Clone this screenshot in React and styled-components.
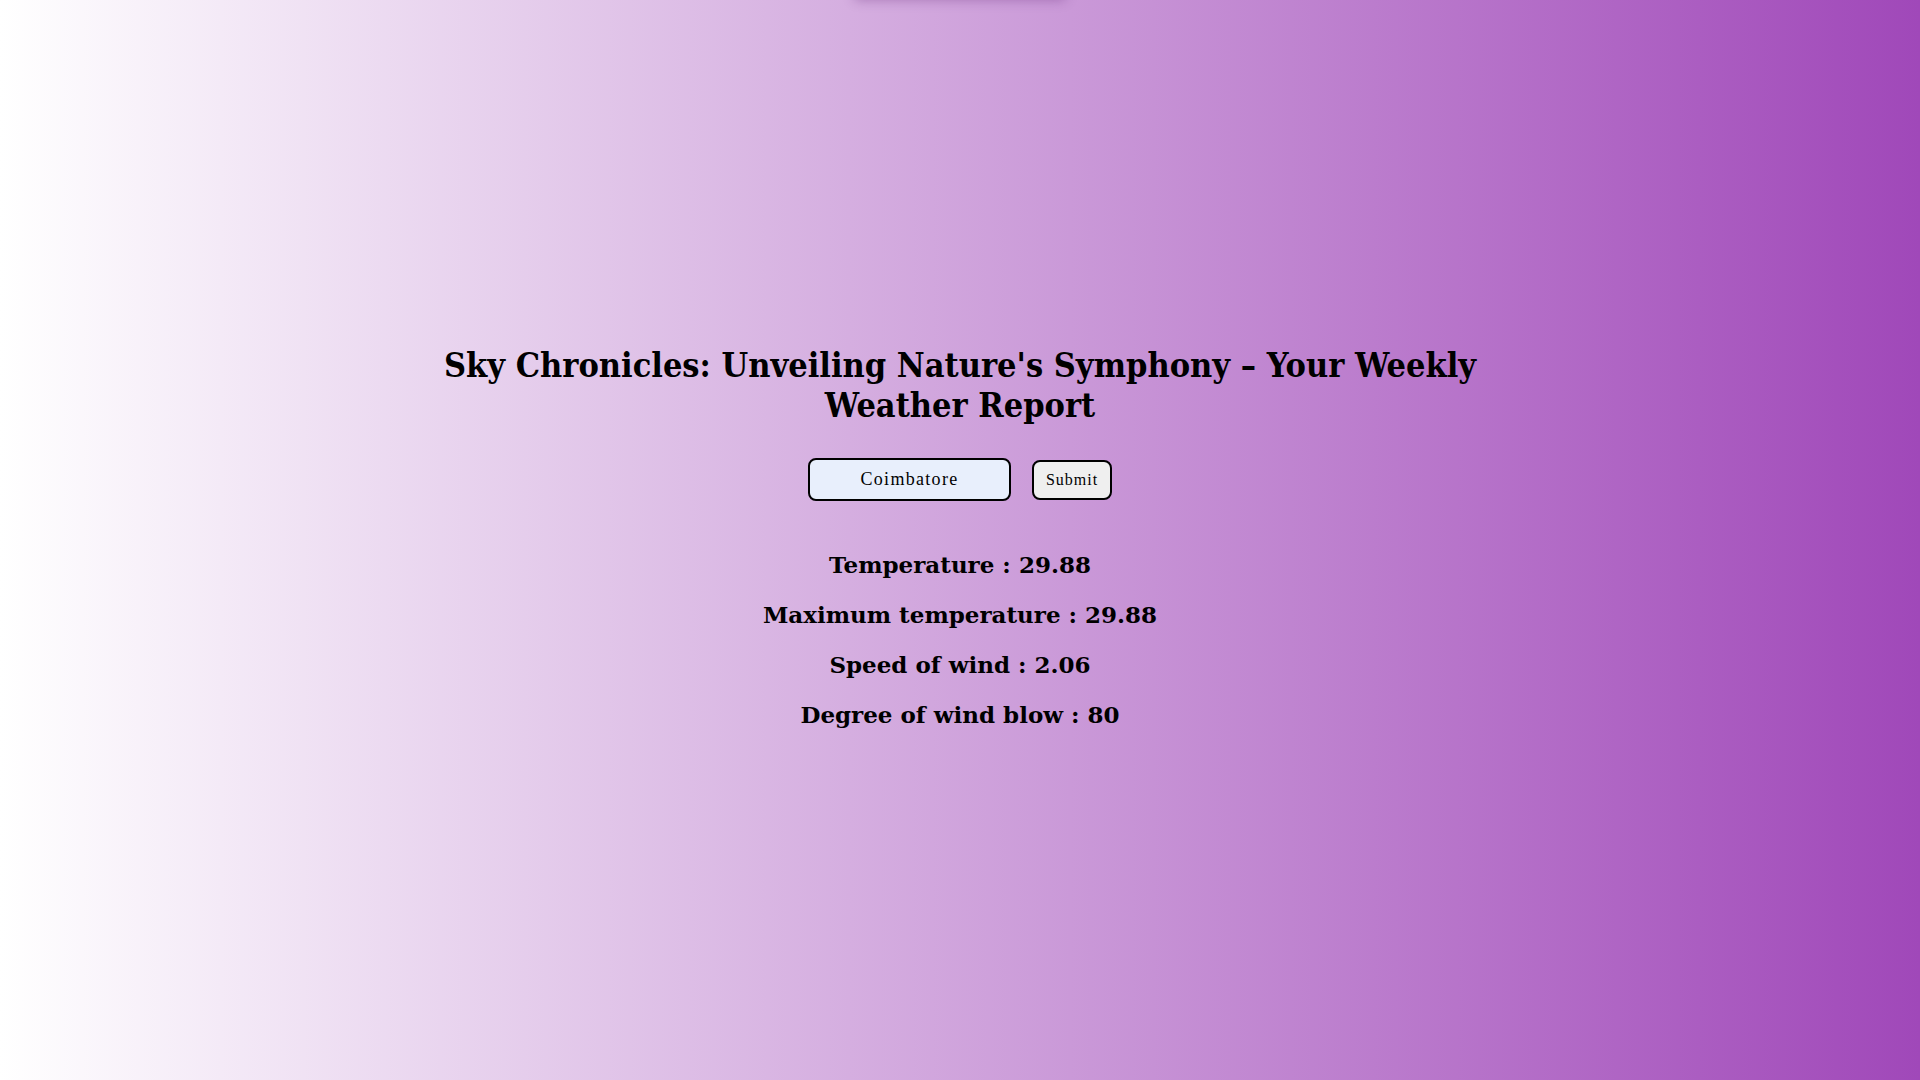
import React, { useState } from "react";
import styled, { createGlobalStyle } from "styled-components";

const GlobalStyle = createGlobalStyle`
  * {
    box-sizing: border-box;
  }
  body {
    margin: 0;
    font-family: "DejaVu Serif", "Liberation Serif", serif;
  }
`;

const Page = styled.div`
  min-height: 100vh;
  padding-bottom: 5px;
  background: linear-gradient(to right, #ffffff, #a048b9);
  display: flex;
  flex-direction: column;
  align-items: center;
  justify-content: center;
  position: relative;
  overflow: hidden;
`;

const TopShade = styled.div`
  position: absolute;
  top: -30px;
  left: 50%;
  width: 210px;
  height: 30px;
  margin-left: -105px;
  box-shadow: 0 0 12px rgba(90, 30, 110, 0.35);
`;

const Title = styled.h1`
  font-family: "DejaVu Serif Condensed", "DejaVu Serif", serif;
  font-stretch: condensed;
  font-size: 34px;
  font-weight: 700;
  line-height: 40px;
  width: 1080px;
  text-align: center;
  margin: 0 0 33px;
  color: #000;
`;

const Form = styled.form`
  display: flex;
  align-items: center;
  gap: 21px;
  margin-bottom: 49px;
`;

const CityInput = styled.input`
  width: 203px;
  height: 43px;
  border: 2px solid #000;
  border-radius: 8px;
  background: #e8effc;
  text-align: center;
  font-family: "Liberation Serif", serif;
  font-size: 18px;
  letter-spacing: 1.3px;
  color: #000;
  outline: none;
`;

const SubmitButton = styled.button`
  width: 80px;
  height: 40px;
  border: 2px solid #000;
  border-radius: 8px;
  background: #efefef;
  font-family: "Liberation Serif", serif;
  font-size: 16px;
  letter-spacing: 1px;
  color: #000;
  cursor: pointer;
`;

const Stats = styled.div`
  display: flex;
  flex-direction: column;
  align-items: center;
  gap: 20px;
`;

const Stat = styled.p`
  margin: 0;
  font-size: 23px;
  font-weight: 700;
  line-height: 30px;
  color: #000;
`;

const App = () => {
  const [city, setCity] = useState("Coimbatore");
  const weather = {
    temp: 29.88,
    maxTemp: 29.88,
    wind: 2.06,
    deg: 80,
  };
  return (
    <>
      <GlobalStyle />
      <Page>
        <TopShade />
        <Title>
          Sky Chronicles: Unveiling Nature's Symphony – Your Weekly Weather
          Report
        </Title>
        <Form onSubmit={e => e.preventDefault()}>
          <CityInput value={city} onChange={e => setCity(e.target.value)} />
          <SubmitButton type="submit">Submit</SubmitButton>
        </Form>
        <Stats>
          <Stat>Temperature : {weather.temp}</Stat>
          <Stat>Maximum temperature : {weather.maxTemp}</Stat>
          <Stat>Speed of wind : {weather.wind}</Stat>
          <Stat>Degree of wind blow : {weather.deg}</Stat>
        </Stats>
      </Page>
    </>
  );
};

export default App;
